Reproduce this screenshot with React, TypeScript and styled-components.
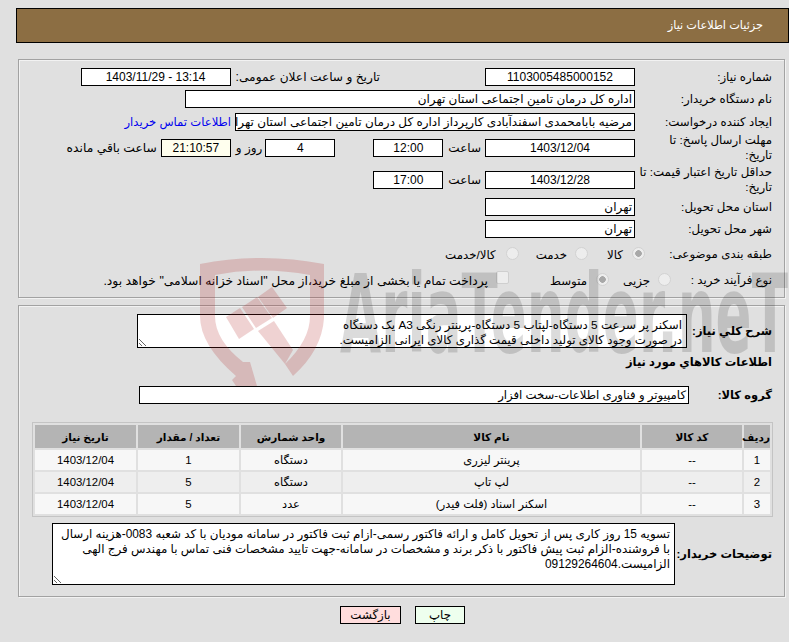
import React from 'react';
import styled, { createGlobalStyle } from 'styled-components';

const GlobalStyle = createGlobalStyle`
  html, body {
    margin: 0;
    padding: 0;
    background: #e0e0e0;
  }
  body {
    font-family: "Liberation Sans", "DejaVu Sans", sans-serif;
    font-size: 11.8px;
    color: #000;
  }
`;

const Page = styled.div`
  position: relative;
  width: 789px;
  height: 642px;
  overflow: hidden;
  box-sizing: border-box;
  padding: 8px 0 0 16px;
`;

const TitleBar = styled.div`
  height: 35px;
  box-sizing: border-box;
  background: #8c6e43;
  border: 1px solid #000;
  color: #fff;
  display: flex;
  align-items: center;
  padding: 0 25px;
  font-size: 11.3px;
`;

const Panel = styled.div<{ $mt: number; $pb: number }>`
  margin: ${p => p.$mt}px 4px 0 2px;
  padding: 8px 12px ${p => p.$pb}px 0;
  border: 1px solid #a2a2a2;
  box-shadow: inset 1px 1px 0 #f2f2f2, 1px 1px 0 #f2f2f2;
`;

const Row = styled.div<{ $mt?: number; $h?: number }>`
  display: flex;
  align-items: center;
  height: ${p => p.$h ?? 18}px;
  margin-top: ${p => p.$mt ?? 0}px;
`;

const Label = styled.div<{ $w: number; $pt?: number }>`
  flex: none;
  width: ${p => p.$w}px;
  padding-top: ${p => p.$pt ?? 0}px;
  line-height: 15px;
`;

const BoldLabel = styled(Label)`
  font-size: 11.5px;
  font-weight: 700;
  white-space: nowrap;
`;

const Text = styled.span<{ $ms?: number; $fs?: number }>`
  flex: none;
  margin-right: ${p => p.$ms ?? 0}px;
  font-size: ${p => p.$fs ?? 12}px;
  white-space: nowrap;
`;

const Field = styled.div<{ $w: number; $ms?: number; $start?: boolean; $bg?: string; $fs?: number }>`
  flex: none;
  box-sizing: border-box;
  width: ${p => p.$w}px;
  height: 18px;
  margin-right: ${p => p.$ms ?? 0}px;
  padding: 0 2px;
  border: 1px solid #000;
  background: ${p => p.$bg ?? '#fff'};
  font-size: ${p => p.$fs ?? 12}px;
  text-align: ${p => (p.$start ? 'right' : 'center')};
  line-height: 16px;
  white-space: nowrap;
  overflow: hidden;
`;

const ContactLink = styled.a`
  flex: none;
  margin-right: 4px;
  color: #0000ee;
  font-size: 11.6px;
  text-decoration: none;
  white-space: nowrap;
`;

const Radio = styled.input.attrs({ type: 'radio', disabled: true })<{ $ms: number }>`
  appearance: none;
  flex: none;
  box-sizing: border-box;
  width: 13px;
  height: 13px;
  margin: 0 ${p => p.$ms}px 0 0;
  border: 1px solid #d2d2d2;
  border-radius: 50%;
  background: #ededed;

  &:checked {
    background: radial-gradient(circle, #a8a8a8 0 3px, #ededed 3.6px);
  }
`;

const Check = styled.input.attrs({ type: 'checkbox', disabled: true })<{ $ms: number }>`
  appearance: none;
  flex: none;
  box-sizing: border-box;
  width: 13px;
  height: 13px;
  margin: -4px ${p => p.$ms}px 0 0;
  border: 1px solid #cfcfcf;
  border-radius: 2px;
  background: #ededed;
`;

const Choice = styled.span<{ $ms: number; $dy?: number; $fs?: number }>`
  flex: none;
  margin-right: ${p => p.$ms}px;
  padding-top: ${p => p.$dy ?? 4}px;
  font-size: ${p => p.$fs ?? 11.8}px;
  white-space: nowrap;
`;

const Area = styled.textarea<{ $w: number; $h: number; $fs: number }>`
  flex: none;
  box-sizing: border-box;
  width: ${p => p.$w}px;
  height: ${p => p.$h}px;
  margin: 0;
  padding: 3px 4px;
  border: 1px solid #000;
  border-radius: 0;
  background: #fff;
  color: #000;
  font-family: inherit;
  font-size: ${p => p.$fs}px;
  line-height: 15px;
  white-space: pre;
  outline: none;
  overflow: hidden;
`;

const Goods = styled.table`
  width: 741px;
  margin: 18px -1px 0 0;
  box-sizing: border-box;
  border: 1px solid #c4c4c4;
  border-collapse: separate;
  border-spacing: 2px;
  table-layout: fixed;
`;

const Th = styled.th<{ $w: number }>`
  width: ${p => p.$w}px;
  height: 23px;
  padding: 0;
  background: #b4b4b4;
  font-size: 10.5px;
  font-weight: 700;
  text-align: center;
`;

const Td = styled.td<{ $alt: boolean }>`
  height: 20px;
  padding: 0;
  background: ${p => (p.$alt ? '#eeeeee' : '#f7f7f7')};
  font-size: 11.4px;
  text-align: center;
`;

const Actions = styled.div`
  display: flex;
  justify-content: center;
  gap: 14px;
  margin-top: 9px;
`;

const Action = styled.button<{ $bg: string; $w: number }>`
  box-sizing: border-box;
  width: ${p => p.$w}px;
  height: 18px;
  padding: 0;
  border: 1px solid #000;
  border-radius: 0;
  background: ${p => p.$bg};
  color: #000;
  font: inherit;
`;

const Watermark = styled.svg`
  position: absolute;
  left: 0;
  top: 0;
  pointer-events: none;
`;

const items = [
  ['1', '--', 'پرینتر لیزری', 'دستگاه', '1', '1403/12/04'],
  ['2', '--', 'لپ تاپ', 'دستگاه', '5', '1403/12/04'],
  ['3', '--', 'اسکنر اسناد (فلت فیدر)', 'عدد', '5', '1403/12/04'],
];

const columns = [
  { title: 'ردیف', w: 26 },
  { title: 'کد کالا', w: 100 },
  { title: 'نام کالا', w: 297 },
  { title: 'واحد شمارش', w: 100 },
  { title: 'تعداد / مقدار', w: 101 },
  { title: 'تاریخ نیاز', w: 101 },
];

const summary =
  'اسکنر پر سرعت 5 دستگاه-لپتاب 5 دستگاه-پرینتر رنگی A3 یک دستگاه\nدر صورت وجود کالای تولید داخلی قیمت گذاری کالای ایرانی الزامیست.';

const buyerNote =
  'تسویه 15 روز کاری پس از تحویل کامل و ارائه فاکتور رسمی-ازام ثبت فاکتور در سامانه مودیان با کد شعبه 0083-هزینه ارسال\nبا فروشنده-الزام ثبت پیش فاکتور با ذکر برند و مشخصات در سامانه-جهت تایید مشخصات فنی تماس با مهندس فرج الهی\nالزامیست.09129264604';

const App: React.FC = () => (
  <Page dir="rtl">
    <GlobalStyle />
    <TitleBar>جزئیات اطلاعات نیاز</TitleBar>

    <Panel $mt={16} $pb={9}>
      <Row>
        <Label $w={137}>شماره نیاز:</Label>
        <Field $w={150}>1103005485000152</Field>
        <Text $ms={105} $fs={12.2}>تاریخ و ساعت اعلان عمومی:</Text>
        <Field $w={150} $ms={5}>13:14 - 1403/11/29</Field>
      </Row>
      <Row $mt={4}>
        <Label $w={137}>نام دستگاه خریدار:</Label>
        <Field $w={450} $start>اداره کل درمان تامین اجتماعی استان تهران</Field>
      </Row>
      <Row $mt={5}>
        <Label $w={137}>ایجاد کننده درخواست:</Label>
        <Field $w={400} $start>مرضیه بابامحمدی اسفندآبادی کارپرداز اداره کل درمان تامین اجتماعی استان تهران</Field>
        <ContactLink href="#">اطلاعات تماس خریدار</ContactLink>
      </Row>
      <Row $mt={8}>
        <Label $w={137}>مهلت ارسال پاسخ: تا<br />تاریخ:</Label>
        <Field $w={150}>1403/12/04</Field>
        <Text $ms={4}>ساعت</Text>
        <Field $w={70} $ms={5}>12:00</Field>
        <Field $w={70} $ms={38}>4</Field>
        <Text $ms={3}>روز و</Text>
        <Field $w={70} $ms={5} $bg="#ffffee">21:10:57</Field>
        <Text $ms={4} $fs={12.3}>ساعت باقي مانده</Text>
      </Row>
      <Row $mt={14}>
        <Label $w={137}>حداقل تاریخ اعتبار قیمت: تا تاریخ:</Label>
        <Field $w={150}>1403/12/28</Field>
        <Text $ms={4}>ساعت</Text>
        <Field $w={70} $ms={5}>17:00</Field>
      </Row>
      <Row $mt={9}>
        <Label $w={137}>استان محل تحویل:</Label>
        <Field $w={150} $start>تهران</Field>
      </Row>
      <Row $mt={4}>
        <Label $w={137}>شهر محل تحویل:</Label>
        <Field $w={150} $start>تهران</Field>
      </Row>
      <Row $mt={6}>
        <Label $w={127} $pt={3}>طبقه بندی موضوعی:</Label>
        <Radio $ms={0} checked readOnly />
        <Choice $ms={9}>کالا</Choice>
        <Radio $ms={19} />
        <Choice $ms={8}>خدمت</Choice>
        <Radio $ms={17} />
        <Choice $ms={10}>کالا/خدمت</Choice>
      </Row>
      <Row $mt={8}>
        <Label $w={101} $pt={2}>نوع فرآیند خرید :</Label>
        <Radio $ms={0} />
        <Choice $ms={8}>جزیی</Choice>
        <Radio $ms={14} checked readOnly />
        <Choice $ms={9} $dy={3}>متوسط</Choice>
        <Check $ms={41} />
        <Choice $ms={8} $dy={3} $fs={12.35}>پرداخت تمام یا بخشی از مبلغ خرید،از محل "اسناد خزانه اسلامی" خواهد بود.</Choice>
      </Row>
    </Panel>

    <Panel $mt={7} $pb={11}>
      <Row $h={34}>
        <BoldLabel $w={85}>شرح کلي نیاز:</BoldLabel>
        <Area $w={550} $h={34} $fs={11.8} readOnly value={summary} />
      </Row>
      <Row $mt={7} $h={14}>
        <BoldLabel $w={300}>اطلاعات کالاهاي مورد نياز</BoldLabel>
      </Row>
      <Row $mt={17}>
        <BoldLabel $w={83}>گروه کالا:</BoldLabel>
        <Field $w={550} $start $fs={11.7}>کامپیوتر و فناوری اطلاعات-سخت افزار</Field>
      </Row>
      <Goods>
        <thead>
          <tr>
            {columns.map(c => (
              <Th key={c.title} $w={c.w}>{c.title}</Th>
            ))}
          </tr>
        </thead>
        <tbody>
          {items.map((row, i) => (
            <tr key={row[0]}>
              {row.map((cell, j) => (
                <Td key={j} $alt={i === 1}>{cell}</Td>
              ))}
            </tr>
          ))}
        </tbody>
      </Goods>
      <Row $mt={6} $h={62}>
        <BoldLabel $w={97}>توضیحات خریدار:</BoldLabel>
        <Area $w={623} $h={62} $fs={11.9} readOnly value={buyerNote} />
      </Row>
    </Panel>

    <Actions>
      <Action $bg="#eeffee" $w={50}>چاپ</Action>
      <Action $bg="#ffdddd" $w={61}>بازگشت</Action>
    </Actions>

    <Watermark width="789" height="386" viewBox="0 0 789 386">
      <g fill="#b02020" fillOpacity="0.2">
        <path d="M200 264 Q262 252 324 264 V318 Q322 350 293 376 L285 364 Q310 340 310 316 V275 Q262 266 215 275 V316 Q215 340 243 362 L250 362 L257 386 L236 386 L232 380 L236 376 Q200 345 200 316 Z" />
        <path d="M226 317 L240 308 L254 329 L239 339 Z" />
        <path d="M242 307 L257 297 L272 318 L256 328 Z" />
        <path d="M258 297 L272 287 L287 308 L273 318 Z" />
        <path d="M258 331 L274 321 L293 350 L285 364 Z" />
      </g>
      <text
        x="340"
        y="352"
        direction="ltr"
        textLength="448"
        lengthAdjust="spacingAndGlyphs"
        fontFamily="DejaVu Sans"
        fontWeight="700"
        fontSize="108"
        fill="#000"
        fillOpacity="0.14"
      >
        AriaTender.neT
      </text>
    </Watermark>
  </Page>
);

export default App;
